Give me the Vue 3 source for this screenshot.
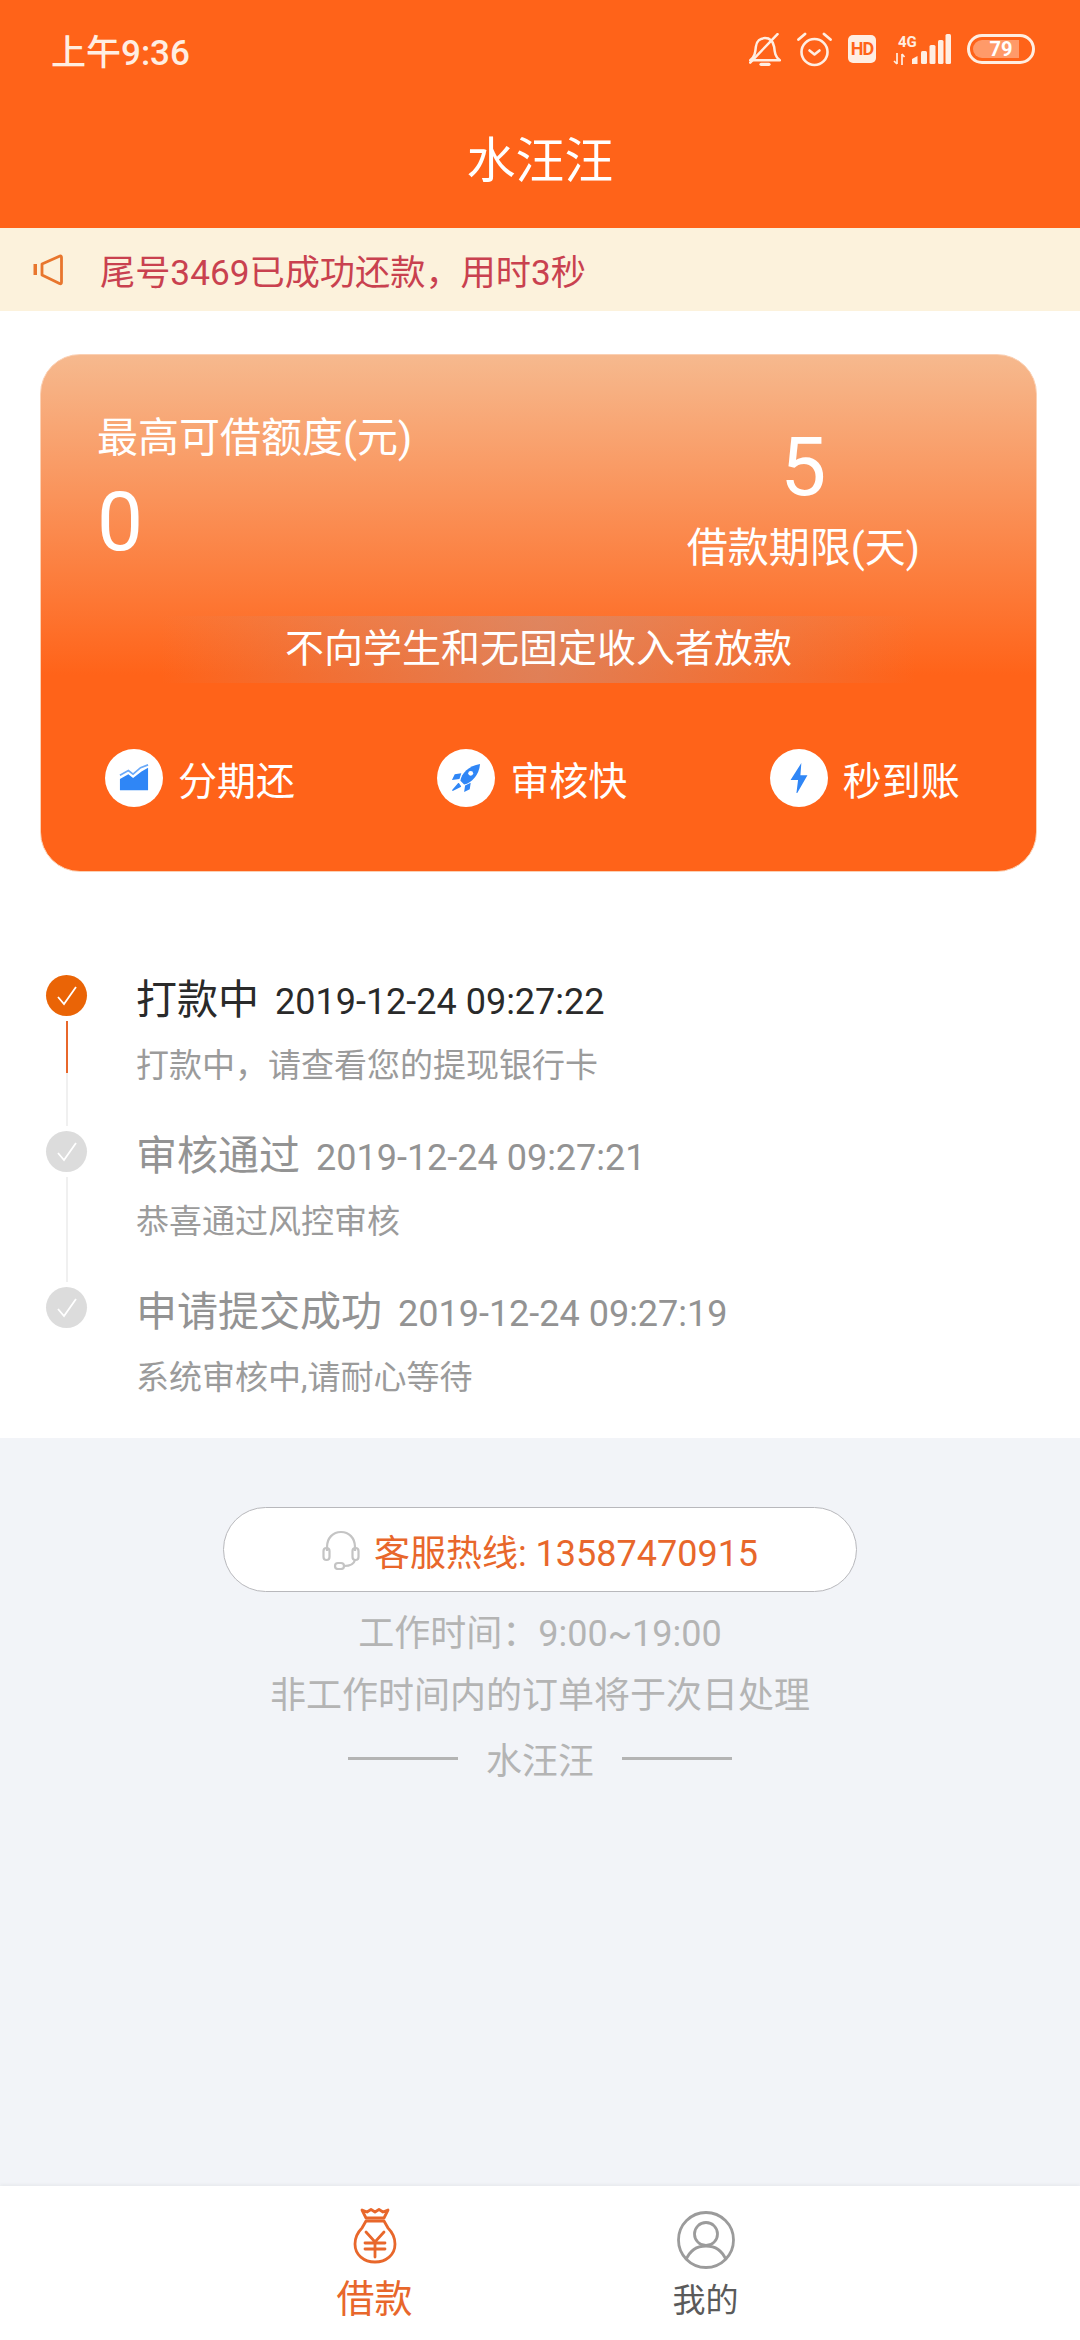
<script setup>
const perks = [
  { id: 'chart', label: '分期还' },
  { id: 'rocket', label: '审核快' },
  { id: 'bolt', label: '秒到账' }
]

const steps = [
  { title: '打款中', time: '2019-12-24 09:27:22', desc: '打款中，请查看您的提现银行卡', active: true },
  { title: '审核通过', time: '2019-12-24 09:27:21', desc: '恭喜通过风控审核', active: false },
  { title: '申请提交成功', time: '2019-12-24 09:27:19', desc: '系统审核中,请耐心等待', active: false }
]
</script>

<template>
  <div class="page">
    <header class="top">
      <div class="status">
        <span class="clock">上午9:36</span>
        <div class="status__icons">
          <svg class="ico-bell" viewBox="2 1 28 29" aria-hidden="true">
            <path d="M3 25 C7 22 7.500 18 8 13 C8.500 8 12 5.500 16 5.500 C20 5.500 23 8 24 13 C24.500 18 25 22 29 25 Z" fill="none" stroke="#ffeee2" stroke-width="2.200" stroke-linejoin="round" />
            <path d="M12.500 28.500 H19.500" stroke="#ffeee2" stroke-width="2.800" stroke-linecap="round" />
            <path d="M3 27 L27 2" stroke="#ffeee2" stroke-width="2.200" stroke-linecap="round" />
          </svg>
          <svg class="ico-alarm" viewBox="0 0 35 35" aria-hidden="true">
            <circle cx="17.500" cy="20" r="13" fill="none" stroke="#ffeee2" stroke-width="2.600" />
            <path d="M12.500 18.500 L17.500 22.500 L22.500 18.500" fill="none" stroke="#ffeee2" stroke-width="2.600" stroke-linecap="round" stroke-linejoin="round" />
            <path d="M1.500 7.500 L8 2 M33.500 7.500 L27 2" stroke="#ffeee2" stroke-width="2.800" stroke-linecap="round" />
          </svg>
          <span class="ico-hd">HD</span>
          <div class="net">
            <span class="net__type">4G</span>
            <svg class="net__arrows" viewBox="0 0 12 12" aria-hidden="true">
              <path d="M3.500 0 V11 M0.500 8 L3.500 11 M8.500 12 V1 M8.500 1 L11 4" fill="none" stroke="#ffeee2" stroke-width="1.700" />
            </svg>
          </div>
          <svg class="ico-signal" viewBox="0 0 40 30" aria-hidden="true">
            <path d="M1 30 V25 L6.500 22 V30 Z" fill="#ffeee2" />
            <rect x="10" y="17" width="6" height="13" rx="1.500" fill="#ffeee2" />
            <rect x="18.500" y="11" width="6" height="19" rx="1.500" fill="#ffeee2" />
            <rect x="27" y="6" width="5.500" height="24" rx="1.500" fill="#ffeee2" />
            <rect x="34.500" y="0" width="5.500" height="30" rx="1.500" fill="#ffeee2" />
          </svg>
          <div class="battery">
            <span class="battery__fill"></span>
            <span class="battery__num">79</span>
          </div>
        </div>
      </div>
      <h1 class="title">水汪汪</h1>
    </header>

    <div class="notice">
      <svg class="notice__icon" viewBox="0 0 30 32" aria-hidden="true">
        <path d="M9 10 L27 2 Q28.500 1.500 28.500 3.500 V28 Q28.500 30.500 26.500 29.500 L9 21 Z" fill="none" stroke="#e8762d" stroke-width="2.800" stroke-linejoin="round" />
        <rect x="0.500" y="10" width="3.500" height="11" fill="#e8762d" />
      </svg>
      <span>尾号3469已成功还款，用时3秒</span>
    </div>

    <section class="main">
      <div class="card">
        <div class="card__top">
          <div class="quota">
            <p class="quota__label">最高可借额度(元)</p>
            <p class="quota__num">0</p>
          </div>
          <div class="term">
            <p class="term__num">5</p>
            <p class="term__label">借款期限(天)</p>
          </div>
        </div>
        <div class="card__banner">不向学生和无固定收入者放款</div>
        <div class="perks">
          <div v-for="p in perks" :key="p.id" class="perk">
            <span class="perk__dot">
              <svg v-if="p.id === 'chart'" class="perk__svg" viewBox="0 0 32 28" aria-hidden="true">
                <path d="M1 27 V15 L10 10 L15 14 L24 7 L31 3 V27 Z" fill="#2f86f6" />
                <path d="M1 11 L10 6 L15 10 L23 3 L31 0" fill="none" stroke="#6aa9f8" stroke-width="1.800" />
              </svg>
              <svg v-else-if="p.id === 'rocket'" class="perk__svg" viewBox="0 0 32 32" aria-hidden="true">
                <path d="M10 19 C11 11 19 3 31 1 C30 13 22 21 14 23 Z" fill="#2f86f6" />
                <path d="M11 11 L4 12 L1 18 L9 17 Z M21 21 L20 28 L14 31 L15 24 Z" fill="#2f86f6" />
                <path d="M8 22 L2 29 L10 25 Z" fill="#2f86f6" stroke="#2f86f6" stroke-width="1.500" stroke-linejoin="round" />
                <circle cx="21" cy="11" r="2.600" fill="#fff" />
              </svg>
              <svg v-else class="perk__svg" viewBox="0 0 32 32" aria-hidden="true">
                <path d="M18.500 0 L7 18 H15 L13 34 L25 13 H17.500 Z" fill="#2f86f6" />
              </svg>
            </span>
            <span class="perk__label">{{ p.label }}</span>
          </div>
        </div>
      </div>

      <ul class="steps">
        <li v-for="(s, i) in steps" :key="s.title" class="step" :class="{ 'step--on': s.active }">
          <div class="step__rail">
            <span class="step__dot">
              <svg viewBox="0 0 24 24" class="step__check" aria-hidden="true">
                <path d="M3 13 L9 20 L21 3" fill="none" stroke="#fff" stroke-width="1.800" />
              </svg>
            </span>
            <span v-if="i < steps.length - 1" class="step__line"></span>
          </div>
          <div class="step__body">
            <p class="step__head">
              <span class="step__title">{{ s.title }}</span>
              <span class="step__time">{{ s.time }}</span>
            </p>
            <p class="step__desc">{{ s.desc }}</p>
          </div>
        </li>
      </ul>
    </section>

    <section class="help">
      <div class="hotline">
        <svg class="hotline__icon" viewBox="0 0 38 40" aria-hidden="true">
          <path d="M5 21 V17 C5 8 11 2 19 2 C27 2 33 8 33 17 V21" fill="none" stroke="#c4c4c4" stroke-width="2.200" />
          <rect x="1.500" y="18" width="6" height="12" rx="3" fill="none" stroke="#c4c4c4" stroke-width="2.200" />
          <rect x="30.500" y="18" width="6" height="12" rx="3" fill="none" stroke="#c4c4c4" stroke-width="2.200" />
          <path d="M33 30 C32 34 28 36 22 36" fill="none" stroke="#c4c4c4" stroke-width="2.200" />
          <rect x="13" y="33" width="9" height="6" rx="3" fill="none" stroke="#c4c4c4" stroke-width="2.200" />
        </svg>
        <span>客服热线: 13587470915</span>
      </div>
      <p class="help__line">工作时间：9:00~19:00</p>
      <p class="help__line">非工作时间内的订单将于次日处理</p>
      <div class="brand">
        <i></i>
        <span>水汪汪</span>
        <i></i>
      </div>
    </section>

    <nav class="tabs">
      <div class="tab tab--on">
        <svg class="tab__bag" viewBox="0 0 44 58" aria-hidden="true">
          <path d="M9 3 L14 5 L18 2.500 L22 5 L26 2.500 L30 5 L35 3 L31 11 H13 Z" fill="none" stroke="#e8672b" stroke-width="2.800" stroke-linejoin="round" />
          <path d="M13 14 H31 L35 21 C40 26 42 31 42 37 C42 48 33 55 22 55 C11 55 2 48 2 37 C2 31 4 26 9 21 Z" fill="none" stroke="#e8672b" stroke-width="2.800" stroke-linejoin="round" />
          <path d="M13 25 L22 35 L31 25 M12 36 H32 M12 42 H32 M22 35 V50" fill="none" stroke="#e8672b" stroke-width="2.800" stroke-linecap="round" />
        </svg>
        <span class="tab__text">借款</span>
      </div>
      <div class="tab">
        <svg class="tab__user" viewBox="0 0 58 58" aria-hidden="true">
          <circle cx="29" cy="29" r="27.500" fill="none" stroke="#9b9b9b" stroke-width="2.800" />
          <circle cx="29" cy="23" r="11.500" fill="none" stroke="#9b9b9b" stroke-width="2.800" />
          <path d="M9 49 C13 39 21 35 29 35 C37 35 45 39 49 49" fill="none" stroke="#9b9b9b" stroke-width="2.800" />
        </svg>
        <span class="tab__text">我的</span>
      </div>
    </nav>
  </div>
</template>

<style>
html,
body {
  margin: 0;
  background: #f2f4f8;
}
</style>

<style scoped>
.page {
  display: flex;
  flex-direction: column;
  width: 1080px;
  height: 2340px;
  overflow: hidden;
  font-family: Roboto, "Noto Sans CJK SC", sans-serif;
  background: #f2f4f8;
}

p,
h1,
ul {
  margin: 0;
  padding: 0;
}

/* top bar */
.top {
  height: 228px;
  background: #ff6319;
  color: #fff;
}

.status {
  display: flex;
  align-items: center;
  justify-content: space-between;
  height: 98px;
  padding: 0 45px 0 51px;
}

.clock {
  font-size: 35px;
  font-weight: 500;
  color: #ffeee2;
}

.status__icons {
  display: flex;
  align-items: center;
}

.ico-bell {
  width: 32px;
  height: 33px;
  margin-right: 16px;
}

.ico-alarm {
  width: 35px;
  height: 35px;
  margin-right: 16px;
}

.ico-hd {
  width: 28px;
  height: 28px;
  margin-right: 17px;
  border-radius: 5px;
  background: #ffeee2;
  color: #ff6319;
  font-size: 18px;
  font-weight: 700;
  line-height: 28px;
  text-align: center;
  letter-spacing: -1px;
}

.net {
  display: flex;
  flex-direction: column;
  align-items: flex-start;
  width: 20px;
  margin-right: -2px;
}

.net__type {
  margin-left: 5px;
  font-size: 15px;
  font-weight: 700;
  line-height: 16px;
  color: #ffeee2;
  white-space: nowrap;
}

.net__arrows {
  width: 13px;
  height: 12px;
  margin-top: 3px;
}

.ico-signal {
  width: 40px;
  height: 30px;
  margin-right: 16px;
}

.battery {
  position: relative;
  display: flex;
  align-items: center;
  justify-content: center;
  box-sizing: border-box;
  width: 68px;
  height: 30px;
  border: 3px solid #ffeee2;
  border-radius: 15px;
}

.battery__fill {
  position: absolute;
  left: 3px;
  top: 3px;
  bottom: 3px;
  width: 46px;
  border-radius: 9px 0 0 9px;
  background: rgba(255, 238, 226, 0.4);
}

.battery__num {
  position: relative;
  font-size: 20px;
  font-weight: 700;
  line-height: 1;
  color: #fff;
}

.title {
  margin-top: 31px;
  font-size: 49px;
  font-weight: 400;
  line-height: 66px;
  text-align: center;
}

/* notice */
.notice {
  display: flex;
  align-items: center;
  gap: 37px;
  height: 83px;
  padding-left: 33px;
  background: #fcf2dc;
  color: #c9414f;
  font-size: 35.2px;
}

.notice__icon {
  width: 30px;
  height: 32px;
}

/* white part */
.main {
  height: 1127px;
  padding: 43px 43px 0 40px;
  box-sizing: border-box;
  background: #fff;
}

.card {
  box-sizing: border-box;
  height: 518px;
  border: 1px solid #fbd0b3;
  border-radius: 40px;
  background: linear-gradient(180deg, #f6b98e 0%, #ff6319 62%, #ff6319 100%);
  color: #fff;
  overflow: hidden;
}

.card__top {
  display: flex;
  justify-content: space-between;
  box-sizing: border-box;
  height: 245px;
  padding: 55px 116px 0 56px;
}

.quota__label,
.term__label {
  font-size: 41px;
  line-height: 56px;
  white-space: nowrap;
}

.quota__num {
  margin-top: 9px;
  font-size: 82px;
  line-height: 94px;
}

.term {
  margin-top: 12px;
  text-align: center;
}

.term__num {
  font-size: 82px;
  line-height: 90px;
}

.term__label {
  margin-top: 8px;
}

.card__banner {
  height: 67px;
  margin: 16px 120px 0;
  background: linear-gradient(90deg, rgba(205, 165, 150, 0) 0%, rgba(205, 145, 125, 0.62) 50%, rgba(205, 165, 150, 0) 100%);
  font-size: 39px;
  line-height: 66px;
  text-align: center;
}

.perks {
  display: grid;
  grid-template-columns: repeat(3, 1fr);
  column-gap: 2px;
  margin-top: 66px;
}

.perk {
  display: flex;
  align-items: center;
  gap: 15px;
  padding-left: 64px;
}

.perk__dot {
  display: flex;
  align-items: center;
  justify-content: center;
  width: 58px;
  height: 58px;
  border-radius: 50%;
  background: #fff;
}

.perk__svg {
  width: 30px;
  height: 30px;
}

.perk__label {
  font-size: 39px;
  white-space: nowrap;
}

/* timeline */
.steps {
  margin-top: 103px;
  list-style: none;
}

.step {
  display: flex;
  height: 156px;
}

.step__rail {
  display: flex;
  flex-direction: column;
  align-items: center;
  width: 53px;
  margin-right: 43px;
}

.step__dot {
  display: flex;
  align-items: center;
  justify-content: center;
  flex: none;
  width: 41px;
  height: 41px;
  border-radius: 50%;
  background: #dcdcdc;
}

.step--on .step__dot {
  background: #ea6406;
}

.step__check {
  width: 24px;
  height: 24px;
}

.step__line {
  flex: 1;
  width: 2px;
  margin: 5px 0;
  background: #f0f0f0;
}

.step--on .step__line {
  background: linear-gradient(180deg, #e8672b 50%, #f0f0f0 50%);
}

.step__head {
  display: flex;
  align-items: baseline;
  gap: 16px;
  height: 48px;
  margin-top: 1px;
  color: #939393;
}

.step--on .step__head {
  color: #2a2a2a;
}

.step__title {
  font-size: 41px;
  line-height: 48px;
}

.step__time {
  font-size: 36px;
}

.step__desc {
  margin-top: 20px;
  font-size: 33px;
  line-height: 44px;
  color: #9b9b9b;
}

/* help block */
.help {
  display: flex;
  flex-direction: column;
  align-items: center;
  flex: 1;
  padding-top: 69px;
  color: #b4b4b4;
}

.hotline {
  display: flex;
  align-items: center;
  justify-content: center;
  gap: 14px;
  box-sizing: border-box;
  width: 634px;
  height: 85px;
  margin-bottom: 11px;
  border: 1px solid #b8b8bc;
  border-radius: 43px;
  background: #fff;
  color: #e8672b;
  font-size: 36px;
}

.hotline__icon {
  width: 38px;
  height: 40px;
}

.help__line {
  font-size: 36px;
  line-height: 62px;
}

.brand {
  display: flex;
  align-items: center;
  gap: 28px;
  height: 62px;
  font-size: 36px;
}

.brand i {
  width: 110px;
  height: 3px;
  background: #b4b4b4;
}

/* bottom tabs */
.tabs {
  display: grid;
  grid-template-columns: 331px 331px;
  justify-content: center;
  height: 154px;
  background: #fff;
  box-shadow: 0 -2px 3px rgba(0, 0, 0, 0.04);
}

.tab {
  display: flex;
  flex-direction: column;
  align-items: center;
  padding-top: 21px;
  color: #5a5a5a;
  font-size: 33px;
}

.tab--on {
  color: #e8672b;
  font-size: 38px;
}

.tab__bag {
  width: 44px;
  height: 58px;
}

.tab__user {
  width: 58px;
  height: 58px;
  margin-top: 4px;
}

.tab__text {
  margin-top: 10px;
  line-height: 44px;
}

.tab--on .tab__text {
  margin-top: 12px;
}
</style>
